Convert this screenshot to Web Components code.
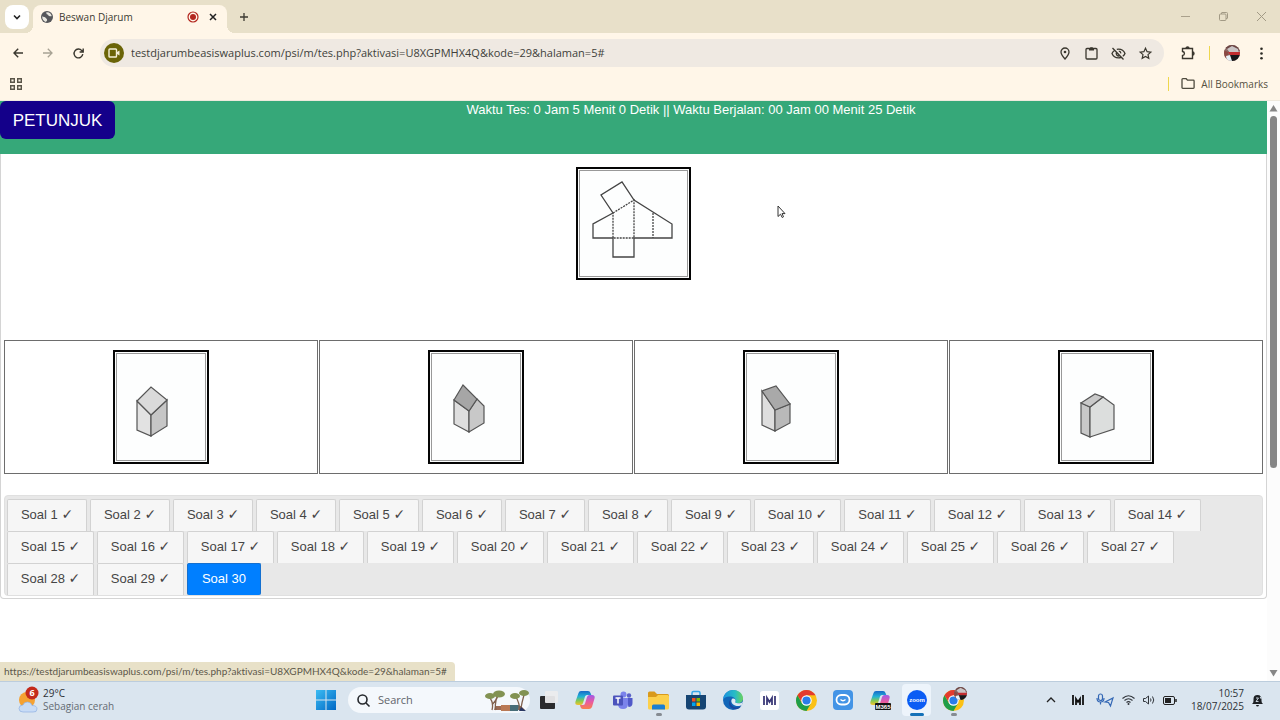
<!DOCTYPE html>
<html lang="id">
<head>
<meta charset="utf-8">
<title>Beswan Djarum</title>
<style>
html, body { margin: 0; }
body { font-family: "Liberation Sans", Arial, sans-serif; background: #fff; }
</style>
</head>
<body>
<desktop-window>
  <tab-strip slot="chrome">Beswan Djarum</tab-strip>
  <address-bar slot="chrome" url="testdjarumbeasiswaplus.com/psi/m/tes.php?aktivasi=U8XGPMHX4Q&amp;kode=29&amp;halaman=5#"></address-bar>
  <bookmarks-bar slot="chrome">All Bookmarks</bookmarks-bar>
  <page-view slot="page">
    <quiz-header>Waktu Tes: 0 Jam 5 Menit 0 Detik || Waktu Berjalan: 00 Jam 00 Menit 25 Detik</quiz-header>
    <quiz-body>
      <quiz-figure slot="question" kind="net"></quiz-figure>
      <answer-option><quiz-figure kind="a"></quiz-figure></answer-option>
      <answer-option><quiz-figure kind="b"></quiz-figure></answer-option>
      <answer-option><quiz-figure kind="c"></quiz-figure></answer-option>
      <answer-option><quiz-figure kind="d"></quiz-figure></answer-option>
      <question-nav slot="nav" total="30" current="30"></question-nav>
    </quiz-body>
    <status-bubble slot="overlay">https://testdjarumbeasiswaplus.com/psi/m/tes.php?aktivasi=U8XGPMHX4Q&amp;kode=29&amp;halaman=5#</status-bubble>
    <mouse-pointer slot="overlay"></mouse-pointer>
  </page-view>
  <task-bar slot="taskbar"></task-bar>
</desktop-window>

<script>
const UI = '"Open Sans", "Noto Sans", sans-serif';
const reset = `*,:host{box-sizing:border-box} button{font:inherit;color:inherit;background:none;border:0;padding:0;margin:0;display:grid;place-items:center} svg{display:block;overflow:visible}`;

function define(name, css, html) {
  customElements.define(name, class extends HTMLElement {
    constructor() {
      super();
      this.attachShadow({ mode: 'open' });
    }
    connectedCallback() {
      this.shadowRoot.innerHTML = `<style>${reset}${css}</style>${typeof html === 'function' ? html(this) : html}`;
    }
  });
}

define('desktop-window', `
  :host{display:flex;flex-direction:column;min-height:100vh}
  ::slotted([slot=page]){flex:1}
`, `<slot name="chrome"></slot><slot name="page"></slot><slot name="taskbar"></slot>`);

define('tab-strip', `
  :host{display:flex;align-items:center;height:33px;background:#e8e0c9;font:10px/16px ${UI};color:#3c3a32;padding-left:5px}
  .list{width:24px;height:24px;border-radius:8px;background:#fff}
  .tab{display:flex;align-items:center;align-self:flex-end;width:194px;height:28px;margin-left:4px;padding:0 6px 4px 8px;border-radius:8px 8px 0 0;background:#fff6e8;position:relative}
  .tab::before,.tab::after{content:"";position:absolute;bottom:0;width:8px;height:8px}
  .tab::before{left:-8px;background:radial-gradient(circle at 0 0,transparent 8px,#fff6e8 8px)}
  .tab::after{right:-8px;background:radial-gradient(circle at 100% 0,transparent 8px,#fff6e8 8px)}
  .title{flex:1;padding-left:6px}
  .tab button{width:16px;margin-left:6px}
  .new{width:24px;height:24px;margin-left:5px}
  .win{margin-left:auto;display:flex}
  .win button{width:38px;height:24px}
`, `
  <button class="list" aria-label="Cari tab"><svg width="10" height="10" fill="none" stroke="#222" stroke-width="1.6"><path d="M2 3.5l3 3 3-3"/></svg></button>
  <div class="tab">
    <svg width="12" height="12" viewBox="0 0 12 12"><circle cx="6" cy="6" r="6" fill="#55565a"/><path d="M1.2 5.2C2.5 6 4 5.600 4.800 7c.6 1 1.500.8 1.300 2.200-.1.800-1 1-1.100 1.700C2.800 10.400 1 8.300 1.200 5.200zM5 1.400c.8 1 .2 1.800 1.500 2.100 1 .2.700 1.300 1.600 1.500.9.100 1.600.5 2.600.1C10.400 3.200 8.700 1.500 7 1.200z" fill="#e9e7df"/></svg>
    <span class="title"><slot></slot></span>
    <svg width="12" height="12"><circle cx="6" cy="6" r="5" fill="none" stroke="#b3261e" stroke-width="1.200"/><circle cx="6" cy="6" r="3" fill="#b3261e"/></svg>
    <button aria-label="Tutup tab"><svg width="8" height="8" stroke="#222" stroke-width="1.500"><path d="M1 1l6 6M7 1l-6 6"/></svg></button>
  </div>
  <button class="new" aria-label="Tab baru"><svg width="10" height="10" stroke="#3c3a32" stroke-width="1.300"><path d="M5 1v8M1 5h8"/></svg></button>
  <div class="win">
    <button aria-label="Kecilkan"><svg width="9" height="9" stroke="#aaa18c"><path d="M0 4.500h9"/></svg></button>
    <button aria-label="Pulihkan"><svg width="9" height="9" stroke="#a29a85" fill="none"><rect x=".5" y="2" width="6.500" height="6.500" rx="1"/><path d="M2.500 2V1q0-.5.5-.5h4.500q1 0 1 1V6q0 .5-.5.500H7"/></svg></button>
    <button aria-label="Tutup"><svg width="9" height="9" stroke="#a29a85"><path d="M0 0l9 9M9 0L0 9"/></svg></button>
  </div>`);

define('user-avatar', `:host{display:block;width:16px;height:16px}svg{width:100%;height:100%}`, `
  <svg viewBox="0 0 16 16"><defs><clipPath id="c"><circle cx="8" cy="8" r="8"/></clipPath></defs><g clip-path="url(#c)">
  <rect width="16" height="16" fill="#8a6a66"/><path d="M0 0h16v6L5 7z" fill="#6d4644"/><path d="M3 4l5-3 6 3 1 4H6z" fill="#c9c3c4"/><path d="M4 7h12v3H6z" fill="#c22d30"/><path d="M0 5l4 2 1 5-5 2z" fill="#8b4a44"/><path d="M5 10h11v6H7z" fill="#17171a"/><path d="M2 11l4-1 2 6H3z" fill="#e6f2f8"/></g></svg>`);

define('address-bar', `
  :host{display:flex;align-items:center;height:40px;background:#fff6e8;padding:0 8px 0 3px;color:#3a372e}
  .nav{width:30px;height:28px}
  .box{flex:1;display:flex;align-items:center;height:28px;margin-left:7px;padding:0 5px 0 4px;border-radius:14px;background:#efe9e2;margin-right:12px}
  .cam{flex:none;width:20px;height:20px;border-radius:50%;background:#6a6408}
  input{flex:1;min-width:0;border:0;background:none;outline:0;padding:0 0 0 7px;font:11px/20px ${UI};color:#403f3a}
  .in{width:27px;height:24px}
  .ext{width:24px;height:24px}
  i{flex:none;width:1px;height:14px;background:#eed74e;margin:0 14px 0 9px}
  .menu{width:22px;height:24px;margin-left:10px}
`, el => `
  <button class="nav" aria-label="Kembali"><svg width="10" height="10" fill="none" stroke="currentColor" stroke-width="1.400"><path d="M10 5H1M5.200.8L1 5l4.200 4.200"/></svg></button>
  <button class="nav" aria-label="Maju"><svg width="10" height="10" fill="none" stroke="#a8a294" stroke-width="1.300"><path d="M0 5h9M4.800.8L9 5 4.800 9.200"/></svg></button>
  <button class="nav" aria-label="Muat ulang"><svg width="11" height="11" fill="none" stroke="currentColor" stroke-width="1.400"><path d="M9.800 6.200A4.400 4.400 0 1 1 8.800 2.600L10 3.800M10.200.4v3.600H6.600"/></svg></button>
  <div class="box">
    <button class="cam" aria-label="Kamera"><svg width="12" height="10" fill="none" stroke="#f4efd8" stroke-width="1.400"><rect x="1" y="1" width="7.500" height="8" rx=".8"/><path d="M9 4l2.500-1.500v5L9 6z" fill="#f4efd8" stroke="none"/></svg></button>
    <input aria-label="Alamat" value="${el.getAttribute('url').replace(/&/g, '&amp;')}">
    <button class="in" aria-label="Lokasi"><svg width="10" height="13" fill="none" stroke="currentColor" stroke-width="1.300"><path d="M5 12C2.500 9.200 1 7.200 1 5a4 4 0 0 1 8 0c0 2.200-1.500 4.200-4 7z"/><circle cx="5" cy="5" r="1.300" fill="currentColor" stroke="none"/></svg></button>
    <button class="in" aria-label="Papan klip"><svg width="13" height="14" fill="none" stroke="currentColor" stroke-width="1.300"><rect x="1" y="2.500" width="11" height="10.500" rx="1"/><path d="M4 2.500h5V4.500H4zM5.200 2.500V1.200h2.600v1.300z" fill="currentColor" stroke="none"/></svg></button>
    <button class="in" aria-label="Pelacakan"><svg width="15" height="13" fill="none" stroke="currentColor" stroke-width="1.300"><path d="M1.500 1l11 11.500M4 3.200C2.500 4 1.500 5.200 1 6.500 2 9 4.500 10.800 7.500 10.800q1.400 0 2.700-.5M5.800 2.400q.8-.2 1.700-.2c3 0 5.500 1.800 6.500 4.300-.4 1-1.200 2-2.200 2.700M5.600 5.200a2.500 2.500 0 0 0 3.300 3.500M7.800 4.200q1.900.2 2.100 2.200"/></svg></button>
    <button class="in" aria-label="Bookmark"><svg width="13" height="13" fill="none" stroke="currentColor" stroke-width="1.200"><path d="M6.500 1.200l1.600 3.500 3.700.4-2.800 2.500.8 3.700-3.300-1.900-3.300 1.900.8-3.700L1.200 5.100l3.700-.4z"/></svg></button>
  </div>
  <button class="ext" aria-label="Ekstensi"><svg width="14" height="14" fill="none" stroke="currentColor" stroke-width="1.400"><path d="M1.500 2.500h10V12.500h-10V9.500c2.600-.4 2.600-3.600 0-4z"/><path d="M5 2.500a1.500 1.500 0 0 1 3 0M11.500 6a1.500 1.500 0 0 1 0 3" fill="currentColor"/></svg></button>
  <i></i><user-avatar></user-avatar>
  <button class="menu" aria-label="Menu"><svg width="3" height="13" fill="#2c2a24"><circle cx="1.500" cy="1.800" r="1.300"/><circle cx="1.500" cy="6.500" r="1.300"/><circle cx="1.500" cy="11.200" r="1.300"/></svg></button>`);

define('bookmarks-bar', `
  :host{display:flex;align-items:center;justify-content:space-between;height:28px;padding:0 12px 6px 10px;background:#fff6e8;border-bottom:1px solid #efe9dd;font:10px/14px ${UI};color:#55503f}
  .all{display:flex;align-items:center;gap:6px;border-left:1px solid #eed74e;padding-left:12px}
`, `
  <button aria-label="Aplikasi"><svg width="12" height="12" fill="none" stroke="#5a5548" stroke-width="1.400"><path d="M.7.7h3.600v3.600H.7zM7.700.7h3.600v3.600H7.700zM.7 7.700h3.600v3.600H.7zM7.700 7.700h3.600v3.600H7.700z"/></svg></button>
  <button class="all"><svg width="14" height="11" fill="none" stroke="#4e4a3e" stroke-width="1.300"><path d="M1 9.500V1.500q0-.8.8-.8h3.400L6.500 2.200h5.800q.8 0 .8.800v6.500q0 .8-.8.8H1.800Q1 10.300 1 9.500z"/></svg><span><slot></slot></span></button>`);

define('page-view', `
  :host{display:flex;position:relative;background:#fff}
  main{flex:1;min-width:0}
`, `<main><slot></slot></main><page-scrollbar></page-scrollbar><slot name="overlay"></slot>`);

define('page-scrollbar', `
  :host{display:flex;flex-direction:column;align-items:center;width:13px;padding:4px 0;background:#fcfcfc}
  .track{flex:1;width:7px;margin:4px 0}
  .thumb{height:64%;background:#868686;border-radius:4px}
`, `<svg width="9" height="7" fill="#868686"><path d="M4.500 0L8.500 6.500h-8z"/></svg><div class="track"><div class="thumb"></div></div><svg width="9" height="7" fill="#868686"><path d="M4.500 6.500L.5 0h8z"/></svg>`);

define('quiz-header', `
  :host{display:grid;grid-template-columns:115px 1fr;height:53px;background:#36a879;color:#fff;font-size:13px;line-height:17px}
  button{height:38px;border-radius:6px;background:#14008a;font-size:17px}
  p{margin:0;text-align:center}
`, `<button>PETUNJUK</button><p><slot></slot></p>`);

define('quiz-body', `
  :host{display:block;border:1px solid #d4d4d4;border-top:0;border-radius:0 0 4px 4px;padding:13px 3px 2px}
  .question{display:grid;justify-items:center;margin-bottom:60px}
  .answers{display:grid;grid-template-columns:repeat(4,1fr);gap:1px;margin-bottom:21px}
`, `<div class="question"><slot name="question"></slot></div><div class="answers"><slot></slot></div><slot name="nav"></slot>`);

define('answer-option', `
  :host{display:grid}
  button{height:134px;border:1px solid #6d6d6d}
`, `<button aria-label="Pilihan jawaban"><slot></slot></button>`);

const figures = {
  net: `<g fill="none" stroke="#444" stroke-width="1.300"><path d="M37 46L17 57V71H37V90H58V71H96V57L58 33L46 15L25 28z"/><path d="M37 46L58 33V71H37zM77 46V71" stroke-dasharray="2 1"/></g>`,
  a: `<g stroke="#555" stroke-width="1.200"><path d="M24 51L38 65V86L24 80z" fill="#e2e2e2"/><path d="M38 65L54 50V76L38 86z" fill="#c6c6c6"/><path d="M24 51L38 37L54 50L38 65z" fill="#dadada"/></g>`,
  b: `<g stroke="#555" stroke-width="1.200"><path d="M26 50L41 61V82L26 74z" fill="#dedede"/><path d="M41 61L49 49L56 56V73L41 82z" fill="#c8c8c8"/><path d="M26 50L35 35L49 49L41 61z" fill="#a6a6a6"/></g>`,
  c: `<g stroke="#555" stroke-width="1.200"><path d="M19 41L32 60V81L19 75z" fill="#dedede"/><path d="M32 60L47 54V73L32 81z" fill="#b9b9b9"/><path d="M19 41L33 36L47 54L32 60z" fill="#a9a9a9"/></g>`,
  d: `<g stroke="#555" stroke-width="1.200"><path d="M23 53L32 57V87L23 83z" fill="#c8c8c8"/><path d="M32 57L45 47L56 55V79L32 87z" fill="#dcdedd"/><path d="M23 53L37 44L45 47L32 57z" fill="#c9c9c9"/></g>`
};

define('quiz-figure', `
  :host{display:block}
  div{border:2px solid #050505;background:#fdfefe}
  svg{border:1px solid #999;margin:1px}
`, el => {
  const k = el.getAttribute('kind');
  const [w, h] = k === 'net' ? [109, 107] : [90, 108];
  return `<div><svg width="${w}" height="${h}" viewBox="4 4 ${w - 2} ${h - 2}" role="img" aria-label="Gambar">${figures[k]}</svg></div>`;
});

define('question-nav', `
  :host{display:block;border:1px solid #e0e0e0;border-radius:4px;background:#e8e8e8;padding:3px 2px 0}
  nav{display:flex;flex-wrap:wrap;column-gap:3px}
  a{width:87px;height:32px;text-align:center;border:1px solid #d2d2d2;border-bottom:0;border-radius:2px 2px 0 0;background:#f6f6f6;color:#454545;font:13px/30px "Liberation Sans","DejaVu Sans",sans-serif;text-decoration:none;white-space:pre}
  a.short{width:80px}
  a[aria-current]{width:74px;background:#007fff;border-color:#1470d0;color:#fff;border-radius:2px}
  b{font-size:14px;line-height:16px}
`, el => {
  const n = +el.getAttribute('total'), cur = +el.getAttribute('current');
  let out = '';
  for (let i = 1; i <= n; i++) out += i === cur ? `<a href="#" aria-current="page">Soal ${i}</a>` : `<a href="#"${i < 10 ? ' class="short"' : ''}>Soal ${i} <b>✓</b></a>`;
  return `<nav>${out}</nav>`;
});

define('status-bubble', `
  :host{position:absolute;left:0;bottom:0;padding:2px 8px 2px 4px;background:#e8e1c8;border-radius:0 4px 0 0;color:#5d584a;font:10px/15px Lato,"Open Sans",sans-serif;font-variant-ligatures:none}
`, `<slot></slot>`);

define('mouse-pointer', `:host{position:absolute;left:777px;top:104px}`, `
  <svg width="9" height="14" fill="#fff" stroke="#333"><path d="M1 1v10.500l2.500-2.300 1.700 3.300 1.300-.7-1.500-3.200H8z"/></svg>`);

const chrome = `<svg width="21" height="21" viewBox="0 0 20 20"><circle cx="10" cy="10" r="10" fill="#fbc116"/><path d="M1.340 5A10 10 0 0 1 18.660 5H10L6 12.300z" fill="#e33b2e"/><path d="M1.340 5A10 10 0 0 0 10 20L14.300 12.500 10 14 5.700 12.500z" fill="#1e9e4a"/><circle cx="10" cy="10" r="5" fill="#fff"/><circle cx="10" cy="10" r="3.900" fill="#2a7de9"/></svg>`;
const copilot = `<defs><linearGradient id="cp1" x2="0" y2="1"><stop stop-color="#1768c8"/><stop offset=".4" stop-color="#21b2d6"/><stop offset=".7" stop-color="#86c950"/><stop offset="1" stop-color="#f4c22b"/></linearGradient><linearGradient id="cp2" x2="0" y2="1"><stop stop-color="#a05be8"/><stop offset=".5" stop-color="#ea5aa0"/><stop offset="1" stop-color="#f8814b"/></linearGradient></defs><path d="M6 1h7q2 0 2.500 2l.8 2H12q-1.500 0-2 1.500L8 13q-.6 2-2.500 2H3q-3.500 0-2.500-3.500L3.500 3Q4 1 6 1z" fill="url(#cp1)"/><path d="M14 19H8q-2 0-2.500-2L5 15h3q1.500 0 2-1.500L12 7q.6-2 2.500-2H17q3.500 0 2.500 3.500L17 17q-.8 2-3 2z" fill="url(#cp2)"/>`;
const apps = [
  ['Tampilan tugas', `<svg width="20" height="20"><rect x="2" y="6" width="15" height="13" rx="1" fill="#2b2b2d"/><rect x="7" y="1" width="13" height="12" rx="1" fill="#ececee" fill-opacity=".94"/></svg>`],
  ['Copilot', `<svg width="20" height="20">${copilot}</svg>`],
  ['Teams', `<svg width="21" height="19"><circle cx="17" cy="4.500" r="2.200" fill="#5b62c9"/><circle cx="11.500" cy="3.500" r="3" fill="#7b83eb"/><path d="M14 7h6.500v5q0 4-4 4z" fill="#5059c9"/><path d="M6 7h10v6q0 5-5 5t-5-5z" fill="#7b83eb"/><rect x="1" y="4.500" width="10" height="10" rx="1" fill="#4b53bc"/><path d="M3.500 7h5M6 7v5.500" stroke="#fff" stroke-width="1.500"/></svg>`],
  ['File Explorer', `<svg width="21" height="19"><path d="M0 2q0-1.500 1.500-1.500h5L9 3h10.500Q21 3 21 4.500V8H0z" fill="#d99a1c"/><path d="M0 6h8l2-2h9.500Q21 4 21 5.500V17q0 1.500-1.500 1.500h-18Q0 18.500 0 17z" fill="#fcd04b"/><path d="M4 18.500V15q0-1.500 1.500-1.500h10Q17 13.500 17 15v3.500z" fill="#1a7fd1"/></svg>`, 'dot'],
  ['Microsoft Store', `<svg width="20" height="20"><path d="M6 5V3q0-1.500 1.500-1.500h5Q14 1.500 14 3v2" fill="none" stroke="#37a7e8" stroke-width="1.500"/><path d="M0 5h20v11.500q0 3-3 3H3q-3 0-3-3z" fill="#164573"/><path d="M6 8h3.500v3.500H6z" fill="#f25022"/><path d="M10.500 8H14v3.500h-3.500z" fill="#7fba00"/><path d="M6 12.500h3.500V16H6z" fill="#00a4ef"/><path d="M10.500 12.500H14V16h-3.500z" fill="#ffb900"/></svg>`],
  ['Edge', `<svg width="20" height="20"><defs><linearGradient id="e"><stop stop-color="#1c91df"/><stop offset=".6" stop-color="#27bcc6"/><stop offset="1" stop-color="#6bd35c"/></linearGradient></defs><circle cx="10" cy="10" r="10" fill="#1266b8"/><path d="M0 9.500C.5 4 5 0 10.200 0 16 0 20 4 20 8.500c0 3-2.300 4.700-5 4.700-2.200 0-3.200-.8-2.600-1.700C13.500 9.500 11.500 7 8 6.500 4 6 1 7.500 0 9.500z" fill="url(#e)"/><path d="M8 9c-2 4 1 8.500 5.500 8.500 2 0 3.800-.8 5-1.700C15 22 6 19 6 13.500 6 11.200 7 9.700 8 9z" fill="#1b48a0"/><path d="M9.500 8.500c-2 1.500-1.500 5.500 2.500 7 3 1.200 5.500.3 7-.8l1-3c-1.500 1.500-3.500 1.700-5 1.500-2.200 0-3.200-.8-2.600-1.700.8-1.500-.4-3.300-2.900-3z" fill="#dfe9f2"/></svg>`],
  ['MyASUS', `<svg width="19" height="19"><rect width="19" height="19" rx="3" fill="#fff"/><path d="M4 5v9M15 5v9M7 14V7l2.500 4L12 7v7" fill="none" stroke="#3c3a78" stroke-width="1.800"/></svg>`],
  ['Chrome', chrome],
  ['Obrolan', `<svg width="20" height="20"><rect width="20" height="20" rx="4" fill="#4394e6"/><rect x="3.500" y="5" width="13" height="9.500" rx="4.700" fill="none" stroke="#fff" stroke-width="1.800"/><path d="M7.500 9.500q2.500 2.500 5 0" fill="none" stroke="#fff" stroke-width="1.300"/></svg>`],
  ['Microsoft 365', `<svg width="20" height="20">${copilot}<rect x="5" y="13" width="16" height="7" rx="1" fill="#111"/><text x="13" y="19" fill="#fff" text-anchor="middle" font-family="Liberation Sans" font-size="6" font-weight="700">M365</text></svg>`],
  ['Zoom', `<svg width="20" height="20"><circle cx="10" cy="10" r="10" fill="#0b5cf4"/><text x="10" y="12" fill="#fff" text-anchor="middle" font-family="Liberation Sans" font-size="6" font-weight="700">zoom</text></svg>`, 'active'],
  ['Chrome profil', chrome + '<user-avatar></user-avatar>', 'dot']
];

define('task-app', `
  :host{display:grid;flex:1;position:relative}
  button{position:relative;height:36px}
  :host([state=active]) button{background:#edf4fb;border-radius:4px;margin:0 4px;height:32px;align-self:center}
  :host([state])::after{content:"";position:absolute;bottom:2px;left:50%;margin-left:-3px;width:6px;height:3px;border-radius:2px;background:#858b92}
  :host([state=active])::after{width:14px;margin-left:-7px;background:#1471b8}
  user-avatar{position:absolute;right:5px;top:5px;width:13px;height:13px}
`, el => `<button aria-label="${apps[el.dataset.i][0]}">${apps[el.dataset.i][1]}</button>`);

define('task-bar', `
  :host{display:grid;grid-template-columns:1fr auto 1fr;align-items:center;height:39px;padding-bottom:2px;background:#dae5ef;border-top:1px solid #bccddd;font:10px/13px ${UI};color:#2d3136}
  .weather{display:flex;align-items:center;justify-self:start;gap:5px;padding-left:18px;text-align:left}
  .weather small{display:block;font-size:10px;color:#646b73}
  .mid{display:flex;align-items:center}
  .start{width:36px;height:36px;margin-right:4px}
  .search{display:flex;align-items:center;width:182px;height:26px;border-radius:13px;background:#f4f8fc;padding-left:9px}
  input{flex:1;min-width:0;border:0;outline:0;background:none;font:11px/20px ${UI};padding:0 0 0 8px}
  input::placeholder{color:#5f646a;opacity:1}
  .apps{display:flex;width:442px}
  .tray{display:flex;align-items:center;justify-content:flex-end;padding-right:17px}
  .icons{display:flex;align-items:center;gap:8px}
  .up{margin-right:8px}
  .brand{margin-right:4px}
  .clock{text-align:right;margin:0 8px 0 14px}
`, `
  <button class="weather">
    <svg width="20" height="26"><circle cx="9" cy="13" r="8" fill="#f5a233"/><path d="M5 25q-4 0-4-3.500T5 18q1-3 4.500-3t4.500 3.500q5 0 5 3.500t-4 3z" fill="#c8dcf6" stroke="#8fb0e3" stroke-width=".7"/><circle cx="14" cy="6" r="6.500" fill="#c42b1c"/><text x="14" y="9" text-anchor="middle" font-family="Open Sans" font-size="9" font-weight="700" fill="#fff">6</text></svg>
    <span>29°C<small>Sebagian cerah</small></span>
  </button>
  <div class="mid">
    <button class="start" aria-label="Mulai"><svg width="20" height="20"><defs><linearGradient id="w" gradientUnits="userSpaceOnUse" x2="20" y2="20"><stop stop-color="#3cbcf3"/><stop offset="1" stop-color="#0067c4"/></linearGradient></defs><path d="M0 0h9.500v9.500H0zM10.500 0H20v9.500h-9.500zM0 10.500h9.500V20H0zM10.500 10.500H20V20h-9.500z" fill="url(#w)"/></svg></button>
    <div class="search"><svg width="13" height="13" fill="none" stroke="#25282c" stroke-width="1.600"><circle cx="5.500" cy="5.500" r="4.500"/><path d="M9 9l3.500 3.500"/></svg><input aria-label="Search" placeholder="Search">
      <svg width="46" height="24"><path d="M10 22l1-4h26l4 4z" fill="#9c6b54"/><path d="M17 17h14v6H17z" fill="#b97955"/><path d="M26 17h9l-1 6h-8z" fill="#476d78"/><path d="M8 22Q10 14 5 9M8 17Q12 13 14 7M12 22Q10 14 14 8M36 22Q35 14 32 9M37 20Q38 14 40 7" fill="none" stroke="#80614e" stroke-width="1.300"/><g fill="#829253"><ellipse cx="6" cy="8" rx="5" ry="3"/><ellipse cx="15" cy="6" rx="6" ry="3.500"/><ellipse cx="31" cy="8" rx="5" ry="3"/><ellipse cx="40" cy="5" rx="5" ry="3"/></g><path d="M35 23l2-4 5 4z" fill="#293762"/></svg>
    </div>
    <div class="apps">${apps.map((a, i) => `<task-app data-i="${i}"${a[2] ? ` state="${a[2]}"` : ''}></task-app>`).join('')}</div>
  </div>
  <div class="tray">
    <div class="icons">
    <svg class="up" width="10" height="6" fill="none" stroke="#222" stroke-width="1.300"><path d="M1 5l4-4 4 4"/></svg>
    <svg class="brand" width="12" height="10" fill="none" stroke="#111" stroke-width="1.800"><path d="M1 0v10M11 0v10M4 10V4l2 3 2-3v6"/></svg>
    <svg width="18" height="14" fill="none" stroke="#3468b5" stroke-width="1.200"><rect x="2.500" y="1" width="4" height="6.500" rx="2"/><path d="M1 5q0 4 3.500 4T8 5M4.500 9v2.500M9 9l8-4-2.500 8-2-3.500z"/></svg>
    <svg width="13" height="10" fill="none" stroke="#30343a" stroke-width="1.100"><path d="M.5 3.500q6-5.500 12 0M2.500 5.500q4-3.600 8 0M4.500 7.500q2-1.800 4 0"/><circle cx="6.500" cy="9" r="1" fill="#30343a" stroke="none"/></svg>
    <svg width="12" height="10" fill="none" stroke="#30343a"><path d="M.5 3.500h2L5.500 1v8l-3-2.500h-2zM7.500 3.500q1 1.500 0 3M9.500 1.500q2.500 3.500 0 7"/></svg>
    <svg width="14" height="9" fill="none" stroke="#222"><rect x=".5" y=".5" width="11" height="8" rx="1.500"/><rect x="2" y="2" width="6" height="5" fill="#222" stroke="none"/><path d="M13 3v3" stroke-width="1.500"/></svg>
    </div>
    <span class="clock">10:57<br>18/07/2025</span>
    <svg width="11" height="13" viewBox="0 0 11 13"><path d="M0 10q1.500-1 1.500-3V5q0-4 4-4t4 4v2q0 2 1.500 3zM4 11h3q-.3 1.500-1.500 1.500T4 11z" fill="#1d2024"/><path d="M4 4h2.500L4 7.500h2.500M8 1.500h2L8 4h2" fill="none" stroke="#dae5ef" stroke-width=".9"/></svg>
  </div>`);
</script>
</body>
</html>
